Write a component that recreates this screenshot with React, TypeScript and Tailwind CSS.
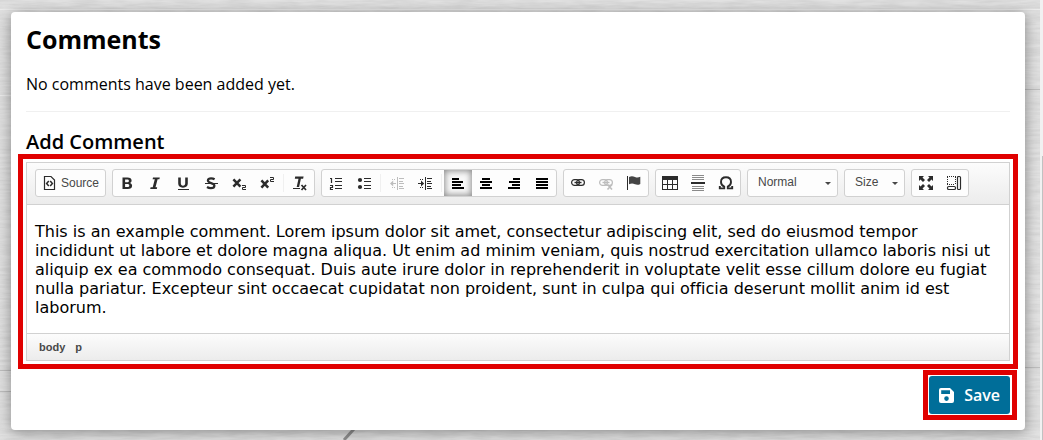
import { useState, type ReactNode } from "react";

const K = "#2b2b2b";

function Icon({ children, dim }: { children: ReactNode; dim?: boolean }) {
  return (
    <svg viewBox="0 0 16 16" className={dim ? "size-4 opacity-30" : "size-4"} fill={K} aria-hidden="true">
      {children}
    </svg>
  );
}

type Bar = [number, number, number, number];

function Bars({ bars }: { bars: Bar[] }) {
  return (
    <g shapeRendering="crispEdges">
      {bars.map(([x, y, w, h]) => (
        <rect key={`${x}-${y}`} x={x} y={y} width={w} height={h} />
      ))}
    </g>
  );
}

function Tool({
  label,
  children,
  active,
  disabled,
  onClick,
}: {
  label: string;
  children: ReactNode;
  active?: boolean;
  disabled?: boolean;
  onClick?: () => void;
}) {
  return (
    <button
      type="button"
      aria-label={label}
      aria-pressed={active}
      disabled={disabled}
      onClick={onClick}
      className={
        active
          ? "flex h-[26px] w-7 items-center justify-center bg-[#f8f8f8] shadow-[inset_0_0_6px_1px_rgba(0,0,0,0.45)]"
          : "flex h-[26px] w-7 items-center justify-center"
      }
    >
      {children}
    </button>
  );
}

function Group({ children }: { children: ReactNode }) {
  return (
    <div role="group" className="flex h-7 items-center rounded-[3px] border border-[#d1d1d1] bg-[#fdfdfd]">
      {children}
    </div>
  );
}

function Separator() {
  return (
    <div className="flex w-[5px] justify-center">
      <div className="h-[18px] w-px bg-[#f0f0f0]" />
    </div>
  );
}

function Picker({ label, options, wide }: { label: string; options: string[]; wide?: boolean }) {
  return (
    <div
      className={
        wide
          ? "relative h-7 w-[91px] rounded-[3px] border border-[#d1d1d1] bg-[#fdfdfd]"
          : "relative h-7 w-[61px] rounded-[3px] border border-[#d1d1d1] bg-[#fdfdfd]"
      }
    >
      <select
        aria-label={label}
        className="block h-full w-full appearance-none bg-transparent pb-[2px] pl-[10px] font-[Liberation_Sans,Arial,sans-serif] text-[12px] text-[#484848]"
      >
        {options.map((option) => (
          <option key={option}>{option}</option>
        ))}
      </select>
      <svg viewBox="0 0 6 3" className="pointer-events-none absolute top-3 right-[6px] h-[3px] w-[6px]" fill="#474747">
        <path d="M0 0H6L3 3Z" />
      </svg>
    </div>
  );
}

const lines: Record<string, Bar[]> = {
  left: [[2, 3, 7, 2], [2, 6, 11, 2], [2, 9, 9, 2], [2, 12, 12, 2]],
  center: [[4, 3, 8, 2], [2, 6, 12, 2], [4, 9, 8, 2], [2, 12, 12, 2]],
  right: [[7, 3, 7, 2], [3, 6, 11, 2], [6, 9, 8, 2], [2, 12, 12, 2]],
  justify: [[2, 3, 12, 2], [2, 6, 12, 2], [2, 9, 12, 2], [2, 12, 12, 2]],
};

const alignments = ["left", "center", "right", "justify"];

function IndentMarks() {
  return (
    <Bars
      bars={[
        [8, 2, 1, 13],
        [10, 3, 5, 1],
        [10, 6, 4, 1],
        [10, 8, 5, 1],
        [10, 11, 4, 1],
        [10, 13, 5, 1],
        [3, 4, 1, 1],
        [5, 4, 1, 1],
        [3, 12, 1, 1],
        [5, 12, 1, 1],
      ]}
    />
  );
}

function ChainLink() {
  return (
    <g fill="none" stroke={K} strokeWidth="1.2">
      <rect x="1.6" y="4.6" width="7.8" height="5.8" rx="2.9" />
      <rect x="6.6" y="4.6" width="7.8" height="5.8" rx="2.9" />
      <path d="M4.5 7.5H11.5" strokeWidth="1.4" />
    </g>
  );
}

function Backdrop() {
  return (
    <svg className="absolute inset-0 h-full w-full" aria-hidden="true">
      <defs>
        <filter id="grain" x="0" y="0" width="100%" height="100%">
          <feTurbulence type="fractalNoise" baseFrequency="0.04 0.35" numOctaves="3" seed="4" />
          <feColorMatrix values="0 0 0 0 0.35  0 0 0 0 0.35  0 0 0 0 0.35  0.35 0 0 0 -0.1" />
        </filter>
      </defs>
      <rect width="100%" height="100%" filter="url(#grain)" />
      <path d="M0 370.5H11M0 391.5H11M1025 367.5H1040M1025 89.5H1040" stroke="#bdbdbd" />
      <path d="M0 95.5H11M0 9.5H1040" stroke="#ebebeb" />
      <path d="M354 429L344 440" stroke="#8e8e8e" strokeWidth="3" />
    </svg>
  );
}

export default function App() {
  const [align, setAlign] = useState("left");

  return (
    <div className="relative flex min-h-screen bg-[#e2e2e2] font-['Open_Sans',sans-serif] text-black">
      <Backdrop />
      <main className="relative min-w-0 flex-1 pt-3 pr-[15px] pb-[11px] pl-[11px]">
        <section className="rounded-[4px] bg-white px-[15px] pt-[11px] pb-[10px] shadow-[0_2px_14px_rgba(0,0,0,0.4)]">
          <h1 className="text-[25px] leading-8 font-bold">Comments</h1>
          <p className="mt-[17px] border-b border-[#f0f0f0] pb-[15px] text-[16px] leading-6">
            No comments have been added yet.
          </p>
          <h2 className="mt-4 text-[20px] leading-7 font-semibold">Add Comment</h2>

          <div className="mt-[6px] border border-[#d1d1d1] outline-5 outline-offset-3 outline-[#e00000]">
            <div
              role="toolbar"
              aria-label="Formatting"
              className="flex flex-wrap gap-[6px] border-b border-[#d1d1d1] bg-linear-to-b from-[#fcfcfc] to-[#ececec] px-2 pt-[6px] pb-[7px]"
            >
              <Group>
                <button
                  type="button"
                  className="flex h-[26px] w-[69px] items-center gap-[3px] pl-[6px] font-[Liberation_Sans,Arial,sans-serif] text-[12px] text-[#484848]"
                >
                  <Icon>
                    <path d="M2.5 1.5H9L12.5 5V14.5H2.5Z" fill="none" stroke={K} strokeWidth="1.2" />
                    <path d="M6.8 6L4.6 8.5L6.8 11M8.2 6L10.4 8.5L8.2 11" fill="none" stroke={K} strokeWidth="1.5" />
                  </Icon>
                  Source
                </button>
              </Group>

              <Group>
                <Tool label="Bold">
                  <Icon>
                    <path
                      fillRule="evenodd"
                      d="M3.5 2.5H8.4C11.2 2.5 12.6 3.5 12.6 5.4C12.6 6.8 11.8 7.7 10.6 8C12.2 8.3 13.1 9.3 13.1 10.8C13.1 12.9 11.5 14 8.7 14H3.5ZM6.1 4.5V7.2H8C9.3 7.2 9.9 6.8 9.9 5.9C9.9 5 9.3 4.5 8 4.5ZM6.1 9V12H8.2C9.6 12 10.3 11.5 10.3 10.5C10.3 9.5 9.6 9 8.2 9Z"
                    />
                  </Icon>
                </Tool>
                <Tool label="Italic">
                  <Icon>
                    <path d="M6 2.5H12.8L12.4 4.3H10.6L8.5 12.3H10.2L9.8 14H3.2L3.6 12.3H5.7L7.8 4.3H5.6Z" />
                  </Icon>
                </Tool>
                <Tool label="Underline">
                  <Icon>
                    <path d="M3.2 2.5H5.8V8.3C5.8 10 6.6 10.7 8 10.7C9.4 10.7 10.2 10 10.2 8.3V2.5H12.8V8.6C12.8 11.4 11.1 12.7 8 12.7C4.9 12.7 3.2 11.4 3.2 8.6Z" />
                    <Bars bars={[[3, 14, 11, 1]]} />
                  </Icon>
                </Tool>
                <Tool label="Strikethrough">
                  <Icon>
                    <path
                      d="M11.6 4.3C10.6 3.7 9.4 3.4 8.1 3.4C6 3.4 4.9 4.3 4.9 5.6C4.9 8.6 11.4 7.6 11.4 10.7C11.4 12.3 10.1 13.1 7.9 13.1C6.4 13.1 5.1 12.7 4 12"
                      fill="none"
                      stroke={K}
                      strokeWidth="2.2"
                    />
                    <Bars bars={[[2, 8, 13, 1]]} />
                  </Icon>
                </Tool>
                <Tool label="Subscript">
                  <Icon>
                    <path d="M2.4 4.4L9.4 11.6M9.4 4.4L2.4 11.6" stroke={K} strokeWidth="2.5" />
                    <path d="M11 10.5H14.5V12.5H11.5V14.5H15" fill="none" stroke={K} />
                  </Icon>
                </Tool>
                <Tool label="Superscript">
                  <Icon>
                    <path d="M2.4 5.4L9.2 12.6M9.2 5.4L2.4 12.6" stroke={K} strokeWidth="2.5" />
                    <path d="M11 2.5H14.5V4.5H11.5V6.5H15" fill="none" stroke={K} />
                  </Icon>
                </Tool>
                <Separator />
                <Tool label="Remove format">
                  <Icon>
                    <path d="M3.2 1.5H11.6L11.1 3.8H8.9L7.1 12H4.7L6.5 3.8H2.8Z" />
                    <path d="M9.5 10L14 15M14 10L9.5 15" stroke={K} strokeWidth="1.7" />
                    <Bars bars={[[1, 13, 7, 1]]} />
                  </Icon>
                </Tool>
              </Group>

              <Group>
                <Tool label="Numbered list">
                  <Icon>
                    <path d="M2 3.5H3.5V8M2 10.5H4.5V12.5H2.5V14.5H5" fill="none" stroke={K} strokeWidth="1.2" />
                    <Bars bars={[[7, 3, 7, 1], [7, 6, 7, 1], [7, 10, 7, 1], [7, 13, 7, 1]]} />
                  </Icon>
                </Tool>
                <Tool label="Bulleted list">
                  <Icon>
                    <circle cx="4" cy="5" r="2.1" />
                    <circle cx="4" cy="12" r="2.1" />
                    <Bars bars={[[8, 3, 7, 1], [8, 6, 7, 1], [8, 10, 7, 1], [8, 13, 7, 1]]} />
                  </Icon>
                </Tool>
                <Separator />
                <Tool label="Decrease indent" disabled>
                  <Icon dim>
                    <IndentMarks />
                    <path d="M4.2 5.5L1 8.5L4.2 11.5V9H7V8H4.2Z" />
                  </Icon>
                </Tool>
                <Tool label="Increase indent">
                  <Icon>
                    <IndentMarks />
                    <path d="M4 5.5L7.2 8.5L4 11.5V9H1V8H4Z" />
                  </Icon>
                </Tool>
                <Separator />
                {alignments.map((name) => (
                  <Tool key={name} label={`Align ${name}`} active={align === name} onClick={() => setAlign(name)}>
                    <svg viewBox="0 0 16 16" className="size-4" fill="#000" aria-hidden="true">
                      <Bars bars={lines[name]} />
                    </svg>
                  </Tool>
                ))}
              </Group>

              <Group>
                <Tool label="Link">
                  <Icon>
                    <ChainLink />
                  </Icon>
                </Tool>
                <Tool label="Unlink" disabled>
                  <Icon dim>
                    <ChainLink />
                    <path d="M9.5 9.5L14 14.5M14 9.5L9.5 14.5" stroke={K} strokeWidth="1.6" />
                  </Icon>
                </Tool>
                <Tool label="Anchor">
                  <Icon>
                    <Bars bars={[[1, 1, 1, 14]]} />
                    <path d="M3 2C5.5 .8 7 1.2 9 2C11 2.8 12.5 2.6 14.3 1.8V8.9C12.5 9.9 11 10 9 9.3C7 8.5 5.5 8.3 3 9.3Z" fill="#444" />
                  </Icon>
                </Tool>
              </Group>

              <Group>
                <Tool label="Table">
                  <Icon>
                    <Bars
                      bars={[[0, 1, 16, 4], [0, 5, 1, 10], [5, 5, 1, 10], [10, 5, 1, 10], [15, 5, 1, 10], [1, 9, 14, 1], [0, 14, 16, 1]]}
                    />
                  </Icon>
                </Tool>
                <Tool label="Horizontal line">
                  <Icon>
                    <g fill="#8a8a8a">
                      <Bars bars={[[2, 0, 12, 1], [2, 2, 12, 1], [2, 4, 12, 1], [2, 11, 12, 1], [2, 13, 12, 1], [2, 15, 12, 1]]} />
                    </g>
                    <Bars bars={[[1, 7, 14, 2]]} />
                  </Icon>
                </Tool>
                <Tool label="Special character">
                  <Icon>
                    <path
                      d="M1.8 11V13.4H6.2V11.6C4.2 10.6 3 9 3 6.9C3 4.1 5 2.2 8 2.2C11 2.2 13 4.1 13 6.9C13 9 11.8 10.6 9.8 11.6V13.4H14.2V11"
                      fill="none"
                      stroke={K}
                      strokeWidth="1.9"
                    />
                  </Icon>
                </Tool>
              </Group>

              <Picker label="Paragraph format" options={["Normal", "Heading 1", "Heading 2"]} wide />
              <Picker label="Font size" options={["Size", "12", "16", "24"]} />

              <Group>
                <Tool label="Maximize">
                  <Icon>
                    <path d="M1 1H6L4.5 2.5L7 5L5 7L2.5 4.5L1 6ZM15 1V6L13.5 4.5L11 7L9 5L11.5 2.5L10 1ZM1 15V10L2.5 11.5L5 9L7 11L4.5 13.5L6 15ZM15 15H10L11.5 13.5L9 11L11 9L13.5 11.5L15 10Z" />
                  </Icon>
                </Tool>
                <Tool label="Show blocks">
                  <Icon>
                    <path d="M1 1.5H10M1 9.5H9M1.5 2V10M9.5 2V10" stroke={K} strokeDasharray="1 1" />
                    <rect x="11.5" y="1.5" width="3" height="13" rx="1" fill="none" stroke={K} strokeWidth="1.2" />
                    <rect x="1.5" y="11.5" width="8" height="3" rx="1.3" fill="none" stroke={K} strokeWidth="1.2" />
                  </Icon>
                </Tool>
              </Group>
            </div>

            <textarea
              aria-label="Add Comment"
              className="block field-sizing-content w-full resize-none px-2 pt-[17px] pb-4 font-[Verdana,DejaVu_Sans,sans-serif] text-[16px] leading-[19px] outline-none [font-variant-ligatures:none]"
              defaultValue="This is an example comment. Lorem ipsum dolor sit amet, consectetur adipiscing elit, sed do eiusmod tempor incididunt ut labore et dolore magna aliqua. Ut enim ad minim veniam, quis nostrud exercitation ullamco laboris nisi ut aliquip ex ea commodo consequat. Duis aute irure dolor in reprehenderit in voluptate velit esse cillum dolore eu fugiat nulla pariatur. Excepteur sint occaecat cupidatat non proident, sunt in culpa qui officia deserunt mollit anim id est laborum."
            />

            <div className="flex gap-[10px] border-t border-[#d1d1d1] bg-linear-to-b from-[#fcfcfc] to-[#ececec] px-3 py-[5px] font-[Liberation_Sans,Arial,sans-serif] text-[11px] leading-4 font-bold text-[#484848]">
              <span>body</span>
              <span>p</span>
            </div>
          </div>

          <div className="mt-[9px] -mr-[7px] flex justify-end">
            <div className="border-5 border-[#e00000] p-px pr-[2px]">
              <button
                type="button"
                className="flex h-[38px] items-center gap-[10px] rounded-[3px] bg-[#006e99] px-[10px] text-[16px] font-semibold text-white"
              >
                <svg viewBox="0 0 15 15" className="size-[15px]" fill="currentColor" aria-hidden="true">
                  <path
                    fillRule="evenodd"
                    d="M2 0H11L15 4V13Q15 15 13 15H2Q0 15 0 13V2Q0 0 2 0ZM2.2 2.2V6H11V2.2ZM7.5 8.3A2.3 2.3 0 1 0 7.5 12.9A2.3 2.3 0 1 0 7.5 8.3Z"
                  />
                </svg>
                Save
              </button>
            </div>
          </div>
        </section>
      </main>
      <div className="relative w-[3px] bg-[#f1f1f1] pt-[156px] pl-[2px]">
        <div className="h-[284px] bg-[#c1c1c1]" />
      </div>
    </div>
  );
}
